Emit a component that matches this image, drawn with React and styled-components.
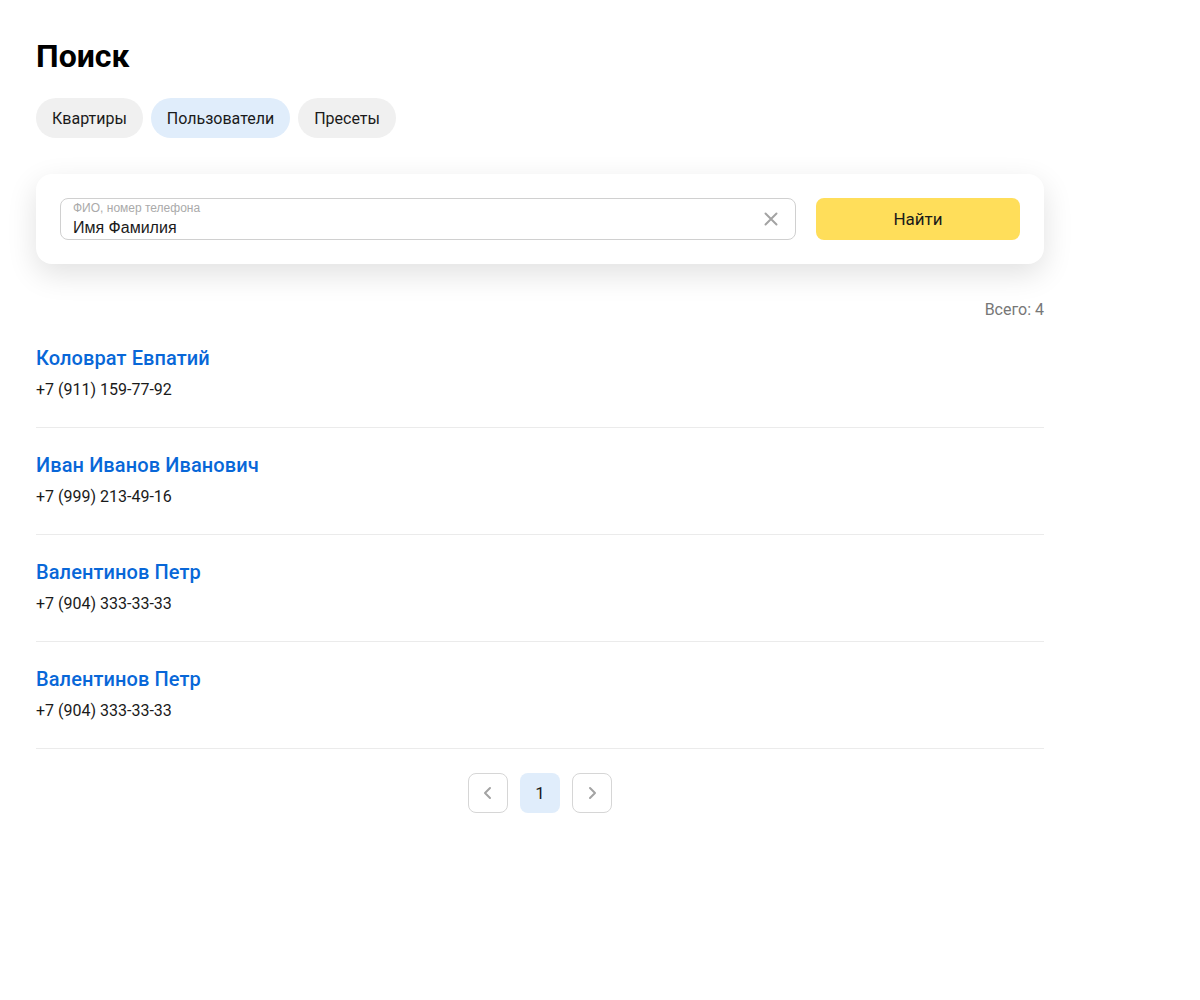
import React, { useState } from 'react';
import styled, { createGlobalStyle } from 'styled-components';

const users = [
  { name: 'Коловрат Евпатий', phone: '+7 (911) 159-77-92' },
  { name: 'Иван Иванов Иванович', phone: '+7 (999) 213-49-16' },
  { name: 'Валентинов Петр', phone: '+7 (904) 333-33-33' },
  { name: 'Валентинов Петр', phone: '+7 (904) 333-33-33' },
];

const tabs = ['Квартиры', 'Пользователи', 'Пресеты'];

const App = () => {
  const [tab, setTab] = useState(1);
  const [query, setQuery] = useState('Имя Фамилия');

  return (
    <>
      <GlobalStyle />
      <Page>
        <Title>Поиск</Title>
        <Tabs>
          {tabs.map((t, i) => (
            <Tab key={t} $active={i === tab} onClick={() => setTab(i)}>
              {t}
            </Tab>
          ))}
        </Tabs>

        <SearchCard>
          <Field>
            <FieldLabel>ФИО, номер телефона</FieldLabel>
            <FieldInput value={query} onChange={(e) => setQuery(e.target.value)} />
            <ClearButton onClick={() => setQuery('')} aria-label="Очистить">
              <svg width="14" height="14" viewBox="0 0 14 14">
                <path d="M1.5 1.5L12.5 12.5M12.5 1.5L1.5 12.5" stroke="#a3a3a3" strokeWidth="2" strokeLinecap="round" />
              </svg>
            </ClearButton>
          </Field>
          <FindButton>Найти</FindButton>
        </SearchCard>

        <Total>Всего: {users.length}</Total>

        <List>
          {users.map((u, i) => (
            <Row key={i}>
              <Name href="#">{u.name}</Name>
              <Phone>{u.phone}</Phone>
            </Row>
          ))}
        </List>

        <Pager>
          <PageButton aria-label="Назад">
            <svg width="10" height="14" viewBox="0 0 10 14">
              <path d="M7 2L2 7L7 12" fill="none" stroke="#a3a3a3" strokeWidth="2" strokeLinecap="round" strokeLinejoin="round" />
            </svg>
          </PageButton>
          <PageButton $current>1</PageButton>
          <PageButton aria-label="Вперёд">
            <svg width="10" height="14" viewBox="0 0 10 14">
              <path d="M3 2L8 7L3 12" fill="none" stroke="#a3a3a3" strokeWidth="2" strokeLinecap="round" strokeLinejoin="round" />
            </svg>
          </PageButton>
        </Pager>
      </Page>
    </>
  );
};

export default App;

// Styled Components
const GlobalStyle = createGlobalStyle`
  body {
    margin: 0;
    background: #fff;
    font-family: Roboto, "Noto Sans", sans-serif;
    color: #000;
  }
`;

const Page = styled.div`
  width: 1008px;
  padding: 36px;
`;

const Title = styled.h1`
  margin: 0 0 22px;
  font-size: 32px;
  line-height: 40px;
  font-weight: 700;
`;

const Tabs = styled.div`
  display: flex;
  gap: 8px;
`;

const Tab = styled.button`
  height: 40px;
  padding: 0 16px;
  border: none;
  border-radius: 20px;
  background: ${(p) => (p.$active ? '#e0edfb' : '#f0f0f0')};
  font-family: inherit;
  font-size: 16px;
  color: #1a1a1a;
  cursor: pointer;
`;

const SearchCard = styled.div`
  margin-top: 36px;
  display: flex;
  align-items: center;
  gap: 20px;
  padding: 24px;
  background: #fff;
  border-radius: 16px;
  box-shadow: 0 10px 30px rgba(0, 0, 0, 0.12);
`;

const Field = styled.label`
  position: relative;
  flex: 1;
  height: 42px;
  box-sizing: border-box;
  border: 1px solid #d0d0d0;
  border-radius: 8px;
  padding: 2px 40px 0 12px;
  display: flex;
  flex-direction: column;
`;

const FieldLabel = styled.span`
  font-family: "Liberation Sans", Arial, sans-serif;
  font-size: 12px;
  line-height: 15px;
  color: #aaa;
`;

const FieldInput = styled.input`
  border: none;
  outline: none;
  padding: 1px 0 0;
  height: 21px;
  font-family: "Liberation Sans", Arial, sans-serif;
  font-size: 16px;
  line-height: 20px;
  color: #1a1a1a;
  background: transparent;
`;

const ClearButton = styled.button`
  position: absolute;
  right: 17px;
  top: 13px;
  border: none;
  background: none;
  padding: 0;
  width: 14px;
  height: 14px;
  display: flex;
  cursor: pointer;
`;

const FindButton = styled.button`
  width: 204px;
  height: 42px;
  border: none;
  border-radius: 8px;
  background: #ffde5a;
  font-family: inherit;
  font-size: 17px;
  color: #1a1a1a;
  cursor: pointer;
`;

const Total = styled.div`
  margin: 36px 0 1px;
  text-align: right;
  font-size: 16px;
  line-height: 20px;
  color: #777;
`;

const List = styled.div`
  display: flex;
  flex-direction: column;
`;

const Row = styled.div`
  display: flex;
  flex-direction: column;
  gap: 8px;
  padding: 25px 0;
  border-bottom: 1px solid #ebebeb;
`;

const Name = styled.a`
  font-size: 20px;
  line-height: 24px;
  font-weight: 500;
  letter-spacing: 0.1px;
  color: #0867d8;
  text-decoration: none;
`;

const Phone = styled.div`
  font-size: 16px;
  line-height: 24px;
  color: #1a1a1a;
`;

const Pager = styled.div`
  margin-top: 24px;
  display: flex;
  justify-content: center;
  gap: 12px;
`;

const PageButton = styled.button`
  width: 40px;
  height: 40px;
  display: flex;
  align-items: center;
  justify-content: center;
  border-radius: 8px;
  border: ${(p) => (p.$current ? 'none' : '1px solid #d6d6d6')};
  background: ${(p) => (p.$current ? '#e0edfb' : '#fff')};
  font-family: inherit;
  font-size: 17px;
  color: #1a1a1a;
  cursor: pointer;
`;
